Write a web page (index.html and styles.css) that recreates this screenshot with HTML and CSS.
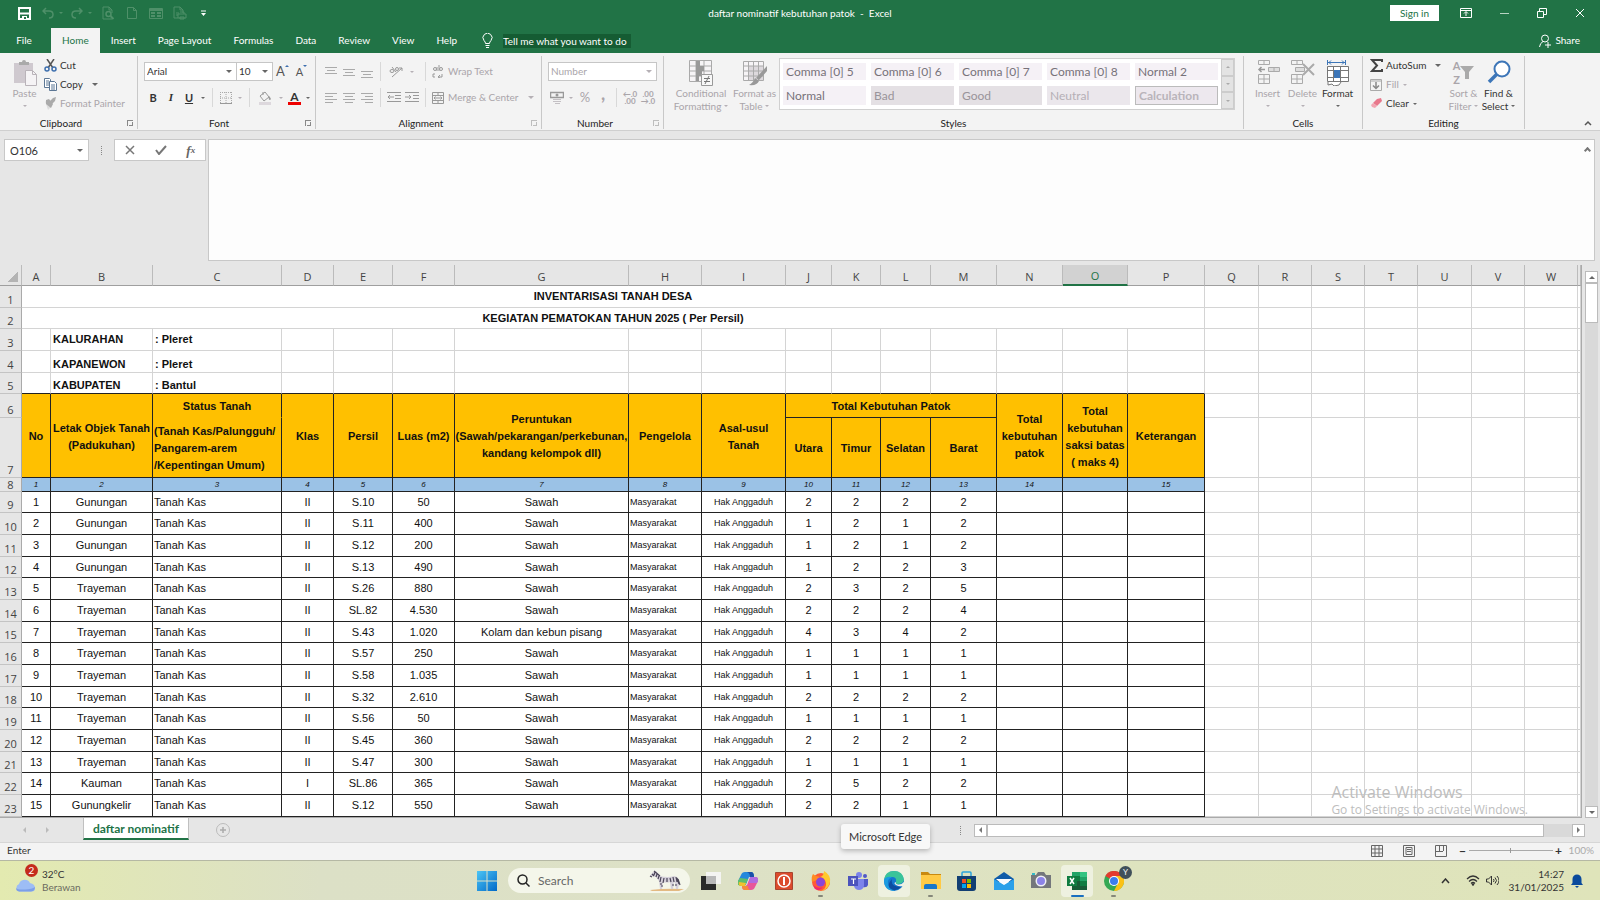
FILE: index.html
```html
<!DOCTYPE html>
<html lang="en">
<head>
  <meta charset="UTF-8">
  <meta name="viewport" content="width=device-width, initial-scale=1.0">
  <title>daftar nominatif kebutuhan patok - Excel</title>
  <link rel="stylesheet" href="styles.css">
</head>
<body>
  <header class="titlebar">
    <div class="quick">
      <button class="q-save" aria-label="Save"><svg width="13" height="13" viewBox="0 0 13 13"><path d="M1 1h11v11H1z" fill="none" stroke="#fff" stroke-width="2"/><path d="M2 6.500h9" stroke="#fff" stroke-width="2"/><path d="M4 9h5v3H4z" fill="#fff"/><path d="M6 10h2v2H6z" fill="#217346"/></svg></button>
      <button class="q-undo" aria-label="Undo"><svg width="12" height="12" viewBox="0 0 12 12"><path d="M4 1L1 4l3 3M1 4h6q4 0 4 3.500t-4 3.500" fill="none" stroke="#4f9069" stroke-width="1.500"/></svg><i class="caret"></i></button>
      <button class="q-undo" aria-label="Redo"><svg width="12" height="12" viewBox="0 0 12 12"><path d="M8 1l3 3-3 3M11 4H5Q1 4 1 7.500T5 11" fill="none" stroke="#4f9069" stroke-width="1.500"/></svg><i class="caret"></i></button>
      <button class="q-icon" aria-label="Print preview"><svg width="13" height="14" viewBox="0 0 13 14"><path d="M10 13H1V1h6l3 3v3M7 1v3h3" fill="none" stroke="#4f9069"/><circle cx="6.500" cy="8" r="2.500" fill="none" stroke="#4f9069" stroke-width="1.500"/><path d="M8.500 10l3 3" stroke="#4f9069" stroke-width="2"/></svg></button>
      <button class="q-icon" aria-label="New"><svg width="10" height="14" viewBox="0 0 10 14"><path d="M.5 1.500h6l3 3v8h-9zM6.500 1.500v3h3" fill="none" stroke="#4f9069"/></svg></button>
      <button class="q-icon" aria-label="Form"><svg width="14" height="13" viewBox="0 0 14 13"><path d="M.5 1.500h13v10H.5z" fill="none" stroke="#4f9069"/><path d="M1 3h12M2 6h4M2 9h4M8 6h4M8 9h4" stroke="#4f9069" stroke-width="2"/></svg></button>
      <button class="q-icon" aria-label="Quick print"><svg width="14" height="14" viewBox="0 0 14 14"><path d="M5 12H1V1h6l3 3v3M7 1v3h3M3 7h3M3 9h2" fill="none" stroke="#4f9069"/><path d="M5 8h8v4H5zM7 6h4v2M7 11h4v2H7z" fill="none" stroke="#4f9069"/></svg></button>
      <button class="q-more" aria-label="Customize"><svg width="7" height="7" viewBox="0 0 7 7"><path d="M1 1h5" stroke="#fff"/><path d="M1 3h5L3.500 6z" fill="#fff"/></svg></button>
    </div>
    <div class="doc-title">daftar nominatif kebutuhan patok&nbsp; -&nbsp; Excel</div>
    <div class="window-tools">
      <button class="signin">Sign in</button>
      <button aria-label="Ribbon display"><svg width="12" height="10" viewBox="0 0 12 10"><path d="M.5.500h11v9H.5zM.5 2.500h11M6 8V4M4 5.500L6 3.500l2 2" fill="none" stroke="#fff"/></svg></button>
      <button aria-label="Minimize"><svg width="9" height="9" viewBox="0 0 9 9"><path d="M0 4.500h9" stroke="#b8d3c2"/></svg></button>
      <button aria-label="Restore"><svg width="10" height="10" viewBox="0 0 10 10"><path d="M.5 3.500h6v6h-6zM2.500 3V.5h7v6H7" fill="none" stroke="#fff"/></svg></button>
      <button aria-label="Close"><svg width="10" height="10" viewBox="0 0 10 10"><path d="M1 1l8 8M9 1L1 9" stroke="#fff"/></svg></button>
    </div>
  </header>

  <nav class="tabs">
    <button class="tab file">File</button>
    <button class="tab active">Home</button>
    <button class="tab">Insert</button>
    <button class="tab">Page Layout</button>
    <button class="tab">Formulas</button>
    <button class="tab">Data</button>
    <button class="tab">Review</button>
    <button class="tab">View</button>
    <button class="tab">Help</button>
    <label class="tell" for="tell"><svg width="11" height="15" viewBox="0 0 11 15"><path d="M3.500 10.500Q3.500 9 2 7.500a4.500 4.500 0 1 1 7 0Q7.500 9 7.500 10.500zM3.500 12.500h4M4 14.500h3" fill="none" stroke="#fff"/></svg></label>
    <input id="tell" class="tell-input" placeholder="Tell me what you want to do">
    <button class="share"><svg width="13" height="14" viewBox="0 0 13 14"><circle cx="6" cy="4.500" r="3.500" fill="none" stroke="#fff"/><path d="M4 7.500Q1 9 .5 13M9 8v6M6 11h6" fill="none" stroke="#fff"/></svg>Share</button>
  </nav>

  <section class="ribbon">
    <div class="group clipboard">
      <div class="tools">
        <button class="big off"><svg width="24" height="26" viewBox="0 0 24 26"><path d="M1 3h19v20H1z" fill="#cfc9cf"/><path d="M6 5V2h3a2 2 0 0 1 4 0h3v3z" fill="#aaa"/><path d="M12.500 10.500h7l4 4v11h-11z" fill="#f5f3f5" stroke="#b9b3b9"/><path d="M19.500 10.500v4h4" fill="none" stroke="#b9b3b9"/></svg><span>Paste</span><i class="caret"></i></button>
        <div class="stack">
          <button><svg width="13" height="13" viewBox="0 0 13 13"><path d="M3 0l6 9M10 0L4 9" stroke="#555" stroke-width="1.500"/><circle cx="3" cy="10" r="2" fill="none" stroke="#3d6fae" stroke-width="1.500"/><circle cx="10" cy="10" r="2" fill="none" stroke="#3d6fae" stroke-width="1.500"/></svg>Cut</button>
          <button><svg width="13" height="13" viewBox="0 0 13 13"><path d="M.5.500h5l1 1v8h-6zM2 3h3M2 5h3M2 7h3" fill="#fff" stroke="#5b7694"/><path d="M5.500 3.500h5l2 2v7h-7zM7 7h4M7 9h4M7 11h4" fill="#fff" stroke="#5b7694"/></svg>Copy<i class="caret gap"></i></button>
          <button class="off"><svg width="13" height="13" viewBox="0 0 13 13"><path d="M1 4l6 6-3 3z" fill="#ddd"/><path d="M2 3l3-1 4 5-2 4-5-4zM9 1l3-1-1 4-3 3-2-3z" fill="#aaa"/></svg>Format Painter</button>
        </div>
      </div>
      <div class="group-name more">Clipboard<i class="launcher"></i></div>
    </div>

    <div class="group font">
      <div class="tools rows">
        <div class="row">
          <label class="combo face"><select aria-label="Font"><option>Arial</option></select><i class="caret"></i></label>
          <label class="combo size"><select aria-label="Font size"><option>10</option></select><i class="caret"></i></label>
          <button class="grow">A<sup class="up"></sup></button>
          <button class="shrink">A<sup class="down"></sup></button>
        </div>
        <div class="row">
          <button class="w18"><b>B</b></button>
          <button class="w18 ital">I</button>
          <button class="w18"><u><b>U</b></u></button>
          <button class="w10" aria-label="Underline options"><i class="caret"></i></button>
          <i class="sep"></i>
          <button class="w18 off" aria-label="Borders"><svg width="12" height="12" viewBox="0 0 12 12"><path d="M.5 0v12M6 0v12M11.500 0v12M0 .5h12M0 6h12" fill="none" stroke="#aaa" stroke-dasharray="1 1"/><path d="M0 11.500h12" stroke="#999"/></svg></button>
          <button class="w10 off" aria-label="Border options"><i class="caret"></i></button>
          <i class="sep"></i>
          <button class="w22 off" aria-label="Fill color"><svg width="14" height="14" viewBox="0 0 14 14"><path d="M2 5l5-4 4 5-5 4zM5 4V1" fill="none" stroke="#999"/><path d="M11 5q3 3 1 4-2 0-1-4" fill="#999"/><path d="M1 11h12v3H1z" fill="#ddd8dd"/></svg></button>
          <button class="w10 off" aria-label="Fill options"><i class="caret"></i></button>
          <button class="w18 color-a">A</button>
          <button class="w10" aria-label="Font color options"><i class="caret"></i></button>
        </div>
      </div>
      <div class="group-name more">Font<i class="launcher"></i></div>
    </div>

    <div class="group align">
      <div class="tools rows">
        <div class="row off">
          <button class="w18" aria-label="Top align"><svg width="12" height="12" viewBox="0 0 12 12"><path d="M0 1.500h12M2 4.500h8M0 7.500h12" stroke="#aaa"/></svg></button>
          <button class="w18" aria-label="Middle align"><svg width="12" height="12" viewBox="0 0 12 12"><path d="M0 3.500h12M2 6.500h8M0 9.500h12" stroke="#aaa"/></svg></button>
          <button class="w18" aria-label="Bottom align"><svg width="12" height="12" viewBox="0 0 12 12"><path d="M0 5.500h12M2 8.500h8M0 11.500h12" stroke="#aaa"/></svg></button>
          <i class="sep"></i>
          <button class="w22 orient" aria-label="Orientation"><svg width="14" height="13" viewBox="0 0 14 13"><path d="M3 12L13 3M13 6V3h-3" fill="none" stroke="#999"/><ellipse cx="3" cy="6" rx="2" ry="1.500" fill="none" stroke="#999"/><path d="M3 2l4 5" stroke="#999"/><circle cx="8" cy="4" r="1.500" fill="none" stroke="#999"/></svg></button>
          <button class="w10" aria-label="Orientation options"><i class="caret"></i></button>
          <i class="sep far"></i>
          <button class="wrap"><svg width="12" height="13" viewBox="0 0 12 13"><circle cx="3" cy="4" r="1.500" fill="none" stroke="#999"/><path d="M5 2v4M7 0v6M3 9h-2v3h2M6 12h4V9M8 10l-2 2 2 1" fill="none" stroke="#999"/><circle cx="9" cy="4" r="1.500" fill="none" stroke="#999"/></svg>Wrap Text</button>
        </div>
        <div class="row off">
          <button class="w18" aria-label="Align left"><svg width="12" height="10" viewBox="0 0 12 10"><path d="M0 .5h12M0 3.500h8M0 6.500h12M0 9.500h8" stroke="#aaa"/></svg></button>
          <button class="w18" aria-label="Center"><svg width="12" height="10" viewBox="0 0 12 10"><path d="M0 .5h12M2 3.500h8M0 6.500h12M2 9.500h8" stroke="#aaa"/></svg></button>
          <button class="w18" aria-label="Align right"><svg width="12" height="10" viewBox="0 0 12 10"><path d="M0 .5h12M4 3.500h8M0 6.500h12M4 9.500h8" stroke="#aaa"/></svg></button>
          <i class="sep"></i>
          <button class="w18" aria-label="Decrease indent"><svg width="14" height="11" viewBox="0 0 14 11"><path d="M0 .5h14M8 3.500h6M8 6.500h6M0 9.500h14M1 5h6M3 3L1 5l2 2" fill="none" stroke="#999"/></svg></button>
          <button class="w18" aria-label="Increase indent"><svg width="14" height="11" viewBox="0 0 14 11"><path d="M0 .5h14M8 3.500h6M8 6.500h6M0 9.500h14M0 5h6M4 3l2 2-2 2" fill="none" stroke="#999"/></svg></button>
          <i class="sep"></i>
          <button class="wrap"><svg width="12" height="12" viewBox="0 0 12 12"><path d="M.5.500h11v11H.5zM.5 3.500h11M.5 8.500h11M6 .5v3M6 8.500v3M2 6h8M3.500 4.500L2 6l1.500 1.500M8.500 4.500L10 6 8.500 7.500" fill="none" stroke="#999"/></svg>Merge &amp; Center<i class="caret gap"></i></button>
        </div>
      </div>
      <div class="group-name more">Alignment<i class="launcher off"></i></div>
    </div>

    <div class="group number">
      <div class="tools rows">
        <div class="row off">
          <label class="combo format"><select aria-label="Number format"><option>Number</option></select><i class="caret"></i></label>
        </div>
        <div class="row off">
          <button class="w18" aria-label="Accounting"><svg width="14" height="13" viewBox="0 0 14 13"><path d="M.5 1.500h13v5H.5z" fill="none" stroke="#999" stroke-width="1.500"/><circle cx="7" cy="4" r="1.500" fill="#999"/><path d="M3 8.500h8M3 10.500h8M5 12.500h5" stroke="#c4c0c4"/></svg></button>
          <button class="w10" aria-label="Accounting options"><i class="caret"></i></button>
          <button class="w18 pct">%</button>
          <button class="w18 comma">,</button>
          <i class="sep"></i>
          <button class="w18 dec"><span>←.0</span><span>.00</span></button>
          <button class="w18 dec"><span>.00</span><span>→.0</span></button>
        </div>
      </div>
      <div class="group-name more">Number<i class="launcher off"></i></div>
    </div>

    <div class="group styles">
      <div class="tools">
        <button class="big off"><svg width="24" height="26" viewBox="0 0 24 26"><path d="M.5.500h22v21H.5zM.5 6h22M.5 11h22M.5 16h22M7 .5v21M15 .5v21" fill="#f6f4f6" stroke="#aaa"/><path d="M7 1h4v5H7zM7 6h8v5H7zM7 11h6v5H7zM7 16h3v5H7z" fill="#999"/><path d="M12.500 14.500h11v11h-11z" fill="#f8f8f8" stroke="#999"/><path d="M15 18.500h6M15 21.500h6M20 16l-4 8" stroke="#777"/></svg><span>Conditional<br>Formatting<i class="caret in"></i></span></button>
        <button class="big off"><svg width="24" height="26" viewBox="0 0 24 26"><path d="M.5 1.500h20v19H.5z" fill="#f6f4f6" stroke="#aaa"/><path d="M6 6h14v14H6z" fill="#ddd9dd"/><path d="M.5 6h20M.5 11h20M.5 16h20M5.500 1.500v19M10.500 1.500v19M15.500 1.500v19" stroke="#aaa"/><path d="M24 6v5l-8 9-3-2zM12 18l4 3q-2 5-10 4 4-2 6-7" fill="#999"/></svg><span>Format as<br>Table<i class="caret in"></i></span></button>
        <div class="gallery">
          <div class="swatches">
            <button>Comma [0] 5</button>
            <button>Comma [0] 6</button>
            <button>Comma [0] 7</button>
            <button>Comma [0] 8</button>
            <button>Normal 2</button>
            <button>Normal</button>
            <button class="gray">Bad</button>
            <button class="gray">Good</button>
            <button class="gray faint">Neutral</button>
            <button class="gray calc">Calculation</button>
          </div>
          <div class="gallery-scroll">
            <button aria-label="Up"><i class="caret flip"></i></button>
            <button aria-label="Down"><i class="caret"></i></button>
            <button aria-label="More"><i class="caret"></i></button>
          </div>
        </div>
      </div>
      <div class="group-name">Styles</div>
    </div>

    <div class="group cells">
      <div class="tools">
        <button class="big off"><svg width="24" height="26" viewBox="0 0 24 26"><path d="M2.500.500h11v4h-11zM8 .5v4M2.500 14.500h11v9h-11zM2.500 19h11M8 14.500v9" fill="none" stroke="#aaa"/><path d="M12.500 7.500h11v4h-11zM18 7.500v4" fill="#ddd" stroke="#aaa"/><path d="M3 9.500h6M5.500 7L3 9.500 5.500 12" fill="none" stroke="#999" stroke-width="1.500"/></svg><span>Insert</span><i class="caret"></i></button>
        <button class="big off"><svg width="24" height="26" viewBox="0 0 24 26"><path d="M.5.500h11v4H.5zM6 .5v4M.5 14.500h11v9H.5zM.5 19h11M6 14.500v9" fill="none" stroke="#aaa"/><path d="M4.500 7.500h9v4h-9z" fill="#ddd" stroke="#aaa"/><path d="M12 4l11 11M23 4L12 15" stroke="#aaa" stroke-width="2"/></svg><span>Delete</span><i class="caret"></i></button>
        <button class="big"><svg width="24" height="26" viewBox="0 0 24 26"><path d="M1.500 0v5M19.500 0v5M2 2.500h17M5 .5l-2 2 2 2M16 .5l2 2-2 2" fill="none" stroke="#3d76b8"/><path d="M1.500 6.500h21v15h-21zM1.500 10.500h21M1.500 17.500h21M7.500 6.500v15M14.500 6.500v15M2 22v3l4-1 2 2 5-1 2-3" fill="#fff" stroke="#777"/><path d="M8 10h6v8H8z" fill="#3d76b8"/></svg><span>Format</span><i class="caret"></i></button>
      </div>
      <div class="group-name">Cells</div>
    </div>

    <div class="group editing">
      <div class="tools">
        <div class="stack">
          <button><svg width="13" height="13" viewBox="0 0 13 13"><path d="M12 3V1H2l5 5.500L2 12h10v-2" fill="none" stroke="#444" stroke-width="2"/></svg>AutoSum<i class="caret gap"></i></button>
          <button class="off"><svg width="13" height="13" viewBox="0 0 13 13"><path d="M.5 1.500h11v11H.5zM.5 3h11" fill="none" stroke="#aaa"/><path d="M6 4v6M3 7.500l3 3 3-3" fill="none" stroke="#888" stroke-width="1.500"/></svg>Fill<i class="caret in"></i></button>
          <button><svg width="13" height="13" viewBox="0 0 13 13"><path d="M7 2l4-1 1 3-5 5-4-3z" fill="#e8788c"/><path d="M3 6l4 3-2 2-3-1-1-2z" fill="#f2a5b2"/></svg>Clear<i class="caret in"></i></button>
        </div>
        <button class="big off"><span class="az"><b>A<br>Z</b><svg width="14" height="14" viewBox="0 0 14 14"><path d="M0 0h14L9 6v7H5V6z" fill="#aaa"/></svg></span><span>Sort &amp;<br>Filter<i class="caret in"></i></span></button>
        <button class="big"><svg width="24" height="26" viewBox="0 0 24 26"><circle cx="15" cy="9" r="7.500" fill="#fff" stroke="#3d76b8" stroke-width="2"/><path d="M10 14l-8 8" stroke="#3d76b8" stroke-width="3.500"/></svg><span>Find &amp;<br>Select<i class="caret in"></i></span></button>
      </div>
      <div class="group-name">Editing</div>
    </div>
    <button class="collapse" aria-label="Collapse ribbon"><svg width="8" height="6" viewBox="0 0 8 6"><path d="M1 5l3-3 3 3" fill="none" stroke="#555" stroke-width="1.500"/></svg></button>
  </section>

  <section class="formula-bar">
    <div class="name-box"><input aria-label="Name box" value="O106"><i class="caret"></i></div>
    <i class="dots"></i>
    <div class="fx">
      <button aria-label="Cancel"><svg width="10" height="10" viewBox="0 0 10 10"><path d="M1 1l8 8M9 1L1 9" stroke="#777" stroke-width="1.500"/></svg></button>
      <button aria-label="Enter"><svg width="12" height="10" viewBox="0 0 12 10"><path d="M1 5l3 4 7-8" fill="none" stroke="#777" stroke-width="2"/></svg></button>
      <button class="fx-btn"><i>f</i><small>x</small></button>
    </div>
    <textarea aria-label="Formula"></textarea>
    <i class="formula-caret"></i>
  </section>

  <main class="workspace">
    <div class="pane">
      <table class="sheet">
        <colgroup id="cols"></colgroup>
        <thead><tr id="letters"></tr></thead>
        <tbody id="top">
          <tr class="h22"><th>1</th><td class="title" colspan="16">INVENTARISASI TANAH DESA</td></tr>
          <tr class="h21"><th>2</th><td class="title" colspan="16">KEGIATAN PEMATOKAN TAHUN 2025 ( Per Persil)</td></tr>
          <tr class="h22 info"><th>3</th><td></td><td>KALURAHAN</td><td>: Pleret</td></tr>
          <tr class="h22 info low"><th>4</th><td></td><td>KAPANEWON</td><td>: Pleret</td></tr>
          <tr class="h21 info low last"><th>5</th><td></td><td>KABUPATEN</td><td>: Bantul</td></tr>
          <tr class="h24 head">
            <th>6</th>
            <td rowspan="2">No</td>
            <td rowspan="2">Letak Objek Tanah<br>(Padukuhan)</td>
            <td class="open">Status Tanah</td>
            <td rowspan="2">Klas</td>
            <td rowspan="2">Persil</td>
            <td rowspan="2">Luas (m2)</td>
            <td rowspan="2">Peruntukan<br>(Sawah/pekarangan/perkebunan,<br>kandang kelompok dll)</td>
            <td rowspan="2">Pengelola</td>
            <td rowspan="2">Asal-usul<br>Tanah</td>
            <td colspan="4">Total Kebutuhan Patok</td>
            <td rowspan="2">Total<br>kebutuhan<br>patok</td>
            <td rowspan="2">Total<br>kebutuhan<br>saksi batas<br>( maks 4)</td>
            <td rowspan="2">Keterangan</td>
          </tr>
          <tr class="h60 head">
            <th>7</th>
            <td class="left">(Tanah Kas/Palungguh/<br>Pangarem-arem<br>/Kepentingan Umum)</td>
            <td>Utara</td><td>Timur</td><td>Selatan</td><td>Barat</td>
          </tr>
          <tr class="h14 nums"><th>8</th><td>1</td><td>2</td><td>3</td><td>4</td><td>5</td><td>6</td><td>7</td><td>8</td><td>9</td><td>10</td><td>11</td><td>12</td><td>13</td><td>14</td><td></td><td>15</td></tr>
        </tbody>
        <tbody id="data"></tbody>
      </table>
      <div class="watermark"><div>Activate Windows</div><p>Go to Settings to activate Windows.</p></div>
    </div>
    <div class="vscroll">
      <button aria-label="Scroll up"><i class="caret flip"></i></button>
      <div class="vtrack"><div class="vthumb"></div></div>
      <button aria-label="Scroll down"><i class="caret"></i></button>
    </div>
  </main>

  <section class="sheet-tabs">
    <div class="tab-nav"><i class="tri left"></i><i class="tri right"></i></div>
    <button class="sheet-tab">daftar nominatif</button>
    <button class="add" aria-label="New sheet"><svg width="14" height="14" viewBox="0 0 14 14"><path d="M7 4v6M4 7h6" stroke="#aaa" stroke-width="1.500"/><circle cx="7" cy="7" r="6.500" fill="none" stroke="#bbb"/></svg></button>
    <i class="dots"></i>
    <div class="hscroll">
      <button aria-label="Scroll left"><i class="tri left"></i></button>
      <div class="htrack"><div class="hthumb"></div></div>
      <button aria-label="Scroll right"><i class="tri right"></i></button>
    </div>
  </section>

  <section class="status">
    <span>Enter</span>
    <div class="views">
      <button aria-label="Normal view"><svg width="12" height="12" viewBox="0 0 12 12"><path d="M.5.500h11v11H.5zM4 0v12M8 0v12M0 4h12M0 8h12" fill="none" stroke="#666"/></svg></button>
      <button aria-label="Page layout view"><svg width="12" height="12" viewBox="0 0 12 12"><path d="M.5.500h11v11H.5zM3 2.500h6v7H3zM4 4.500h4M4 6.500h4" fill="none" stroke="#666"/></svg></button>
      <button aria-label="Page break view"><svg width="12" height="12" viewBox="0 0 12 12"><path d="M.5.500h11v11H.5zM4.500 0v6M8.500 0v6M0 6.500h8" fill="none" stroke="#666"/></svg></button>
    </div>
    <div class="zoom">
      <button>−</button>
      <input type="range" aria-label="Zoom" min="0" max="100" value="50">
      <button>+</button>
      <span>100%</span>
    </div>
  </section>

  <footer class="taskbar">
    <button class="weather">
      <span class="cloud"><svg width="21" height="14" viewBox="0 0 21 14"><path d="M4 13.500a4 4 0 0 1 0-7.500 6 6 0 0 1 11-1q5 1 5 5t-4 3.500z" fill="#9dbdf5"/><path d="M1 10q2 2 9 1.500T20 9q0 4-4 4.500H4Q1 13 1 10" fill="#7c9fe8"/></svg><i class="badge">2</i></span>
      <span class="lines"><span>32°C</span><span class="dim">Berawan</span></span>
    </button>
    <div class="center">
      <button class="start" aria-label="Start"><svg width="20" height="20" viewBox="0 0 20 20"><defs><linearGradient id="w" x1="0" y1="0" x2="1" y2="1"><stop offset="0" stop-color="#4cc5f5"/><stop offset="1" stop-color="#0068c8"/></linearGradient></defs><path d="M0 0h9.500v9.500H0zM10.500 0H20v9.500h-9.500zM0 10.500h9.500V20H0zM10.500 10.500H20V20h-9.500z" fill="url(#w)"/></svg></button>
      <label class="search">
        <svg width="13" height="13" viewBox="0 0 13 13"><circle cx="5.500" cy="5.500" r="4.500" fill="none" stroke="#222" stroke-width="1.500"/><path d="M9 9l3.500 3.500" stroke="#222" stroke-width="1.500"/></svg>
        <input placeholder="Search" aria-label="Search">
        <svg width="36" height="22" viewBox="0 0 36 22"><path d="M1 20q16-2 34-1l-5 2H3z" fill="#e3b982"/><path d="M1 6l3-4 3-1 4 5q8 2 14 0 3 0 4 3l1 5-1 5h-2l-1-6-1-1-1 7h-2l-1-7q-3 1-7 0l-1 7h-2l-1-8-3-4-4-1-1 1z" fill="#d5d0da"/><path d="M5 1l6 5M3 4l2 2M6 2L5 5M8 4L7 7M10 6L9 9M12 7l-1 5M15 8l-1 5M18 8v4M21 8l1 4M24 7l1 5M27 7l1 5M11 14h2M12 16h2M23 15h2M26 15h2M28 8l2 6M29 9l2 6M1 6l2 1" fill="none" stroke="#4b4558" stroke-width="1.200"/></svg>
      </label>
      <nav class="apps">
        <button aria-label="Task view"><svg width="20" height="20" viewBox="0 0 20 20"><path d="M0 5h15v14H0z" fill="#2a2a2a"/><path d="M5 1h15v12H5z" fill="#f4f4f2"/><path d="M5 5h10v8H5z" fill="#b9b9b9"/></svg></button>
        <button aria-label="Copilot"><svg width="20" height="20" viewBox="0 0 20 20"><path d="M7 1h6q3 0 3 5h-4L8 14H3q-4 0-3-4l3-6q1-3 4-3" fill="#2488dc"/><path d="M2 7l-2 3q-1 5 3 5h4l3-7z" fill="#5fbf6a"/><path d="M1 11q-1 4 2 4h4l1-3z" fill="#f0c22e"/><path d="M13 19H7q-3 0-3-4h4l4-9h5q4 0 3 4l-3 6q-1 3-4 3" fill="#e8569a"/><path d="M4 15h6q0 4 3 4H7q-3 0-3-4" fill="#f58a3c"/><path d="M12 6h5q4 0 3 4l-1 2h-8z" fill="#b06be0"/><path d="M9 1h4q3 0 3 5h-4q0-4-3-5" fill="#1b4fa8"/><path d="M8 14l3-8h1l-3 8z" fill="#e6e8d4"/></svg></button>
        <button aria-label="Power"><svg width="18" height="18" viewBox="0 0 18 18"><path d="M.5.500h17v17H.5z" fill="#dc4b2c" stroke="#a8452f"/><circle cx="9" cy="9" r="6" fill="none" stroke="#fff" stroke-width="1.500"/><path d="M9 5v8" stroke="#fff" stroke-width="2"/></svg></button>
        <button class="run" aria-label="Firefox"><svg width="20" height="20" viewBox="0 0 20 20"><circle cx="10" cy="11" r="9" fill="#ff5a36"/><path d="M13 0q7 4 6 11t-9 9q6-3 5-8t-6-6q4-1 4-6" fill="#ffc92e"/><path d="M2 3q3 3 7 3l-3 3-5 2q-1-5 1-8" fill="#ff8b25"/><circle cx="9.500" cy="11" r="4.500" fill="#8a46d8"/><path d="M2 14q4 4 10 2-3 5-8 2z" fill="#f2286b"/></svg></button>
        <button aria-label="Teams"><svg width="20" height="18" viewBox="0 0 20 18"><circle cx="11" cy="3" r="3" fill="#7b83eb"/><circle cx="17" cy="4" r="2" fill="#5059c9"/><path d="M14 7h6v6q-1 3-5 2z" fill="#5059c9"/><path d="M6 7h10v7q-1 4-5 4t-5-4z" fill="#7b83eb"/><path d="M0 4h10v10H0z" fill="#4b53bc"/><path d="M3 7h5M5.500 7v5" stroke="#fff" stroke-width="1.200"/></svg></button>
        <button class="lit" aria-label="Microsoft Edge"><svg width="20" height="20" viewBox="0 0 20 20"><circle cx="10" cy="10" r="10" fill="#1477cf"/><path d="M0 9Q1 0 10 0t10 9q-1 4-6 4-3 0-2-2 1-5-4-5-6 0-8 3" fill="#3ac49a"/><path d="M0 9q2-4 8-3-5 2-4 7t7 7Q0 20 0 9" fill="#1a9be0"/><path d="M8 8q-2 8 9 8-5 5-10 2T8 8" fill="#0d4da0"/><path d="M12 11q-1 2 2 2.500t6-2.500q1 2-1 4-4 1-7-1t0-3" fill="#f0f2e4"/></svg></button>
        <button class="run" aria-label="File Explorer"><svg width="20" height="18" viewBox="0 0 20 18"><path d="M0 0h7l2 2h11v6H0z" fill="#c98a10"/><path d="M0 3h20v14H0z" fill="#ffca45"/><path d="M3 17v-3q0-2 2-2h9q2 0 2 2v3z" fill="#1877c9"/></svg></button>
        <button aria-label="Store"><svg width="20" height="20" viewBox="0 0 20 20"><path d="M5 5V2q0-1 1-1h7q1 0 1 1v3" fill="none" stroke="#2aa3dc" stroke-width="1.500"/><path d="M0 5h19v12q0 3-3 3H3q-3 0-3-3z" fill="#123f73"/><path d="M5 8h4v4H5z" fill="#f25022"/><path d="M10 8h4v4h-4z" fill="#7fba00"/><path d="M5 13h4v4H5z" fill="#00a4ef"/><path d="M10 13h4v4h-4z" fill="#ffb900"/></svg></button>
        <button aria-label="Mail"><svg width="20" height="18" viewBox="0 0 20 18"><path d="M0 7l10-7 10 7v3H0z" fill="#0f5ba8"/><path d="M2 7h16l-8 7z" fill="#fff"/><path d="M0 7l10 6 10-6v11H0z" fill="#2aa0ea"/><path d="M3 7h14l-7 5z" fill="#f8fbff"/></svg></button>
        <button aria-label="Camera"><svg width="20" height="17" viewBox="0 0 20 17"><path d="M0 3h5l2-3h6l2 3h5v13H0z" fill="#74777c"/><circle cx="10" cy="9" r="5.500" fill="#f0f0f5"/><circle cx="10" cy="9" r="4" fill="#8c83e8"/><path d="M1 1h3v2H1z" fill="#35b8c8"/></svg></button>
        <button class="lit on" aria-label="Excel"><svg width="20" height="18" viewBox="0 0 20 18"><path d="M5 0h15v18H5z" fill="#21a366"/><path d="M5 4h8v5H5z" fill="#107c41"/><path d="M13 0h7v5h-7z" fill="#33c481"/><path d="M5 9h15v9H5z" fill="#185c37"/><path d="M13 9h7v5h-7z" fill="#107c41"/><path d="M0 4h10v10H0z" fill="#107c41"/><path d="M3 6l4 6M7 6l-4 6" stroke="#fff" stroke-width="1.500"/></svg></button>
        <button class="run" aria-label="Chrome"><svg width="20" height="20" viewBox="0 0 20 20"><circle cx="10" cy="10" r="10" fill="#34a853"/><path d="M10 10L1.300 5A10 10 0 0 1 18.700 5z" fill="#e33b2e"/><path d="M10 5h8.700A10 10 0 0 1 10 20l4-8z" fill="#fbc116"/><circle cx="10" cy="10" r="5" fill="#fff"/><circle cx="10" cy="10" r="4" fill="#3b7ded"/></svg><i class="avatar">Y</i></button>
      </nav>
    </div>
    <div class="tray">
      <svg width="9" height="6" viewBox="0 0 9 6"><path d="M1 5l3.500-4L8 5" fill="none" stroke="#333" stroke-width="1.500"/></svg>
      <svg class="wifi" width="14" height="11" viewBox="0 0 14 11"><path d="M1 4q6-6 12 0M3 6.500q4-4 8 0M5 8.500q2-2 4 0" fill="none" stroke="#333" stroke-width="1.200"/><circle cx="7" cy="9.500" r="1.200" fill="#333"/></svg>
      <svg width="13" height="11" viewBox="0 0 13 11"><path d="M.5 4h2l3-3v9l-3-3h-2zM7.500 4q1 1.500 0 3M9 2.500q3 3 0 6M11 1q4 4.500 0 9" fill="none" stroke="#333"/></svg>
      <span class="lines clock"><span>14:27</span><span>31/01/2025</span></span>
      <svg width="12" height="14" viewBox="0 0 12 14"><path d="M0 11l1.500-2V5a4.500 4.500 0 0 1 9 0v4l1.500 2zM4 12h4l-2 2z" fill="#0a4a9c"/></svg>
    </div>
  </footer>
  <div class="tooltip">Microsoft Edge</div>

  <script src="script.js"></script>
</body>
</html>
```
FILE: script.js
```js
const letters = 'ABCDEFGHIJKLMNOPQRSTUVW'.split('');
const widths = [22, 29, 102, 129, 52, 59, 62, 174, 73, 84, 46, 49, 50, 66, 66, 65, 77, 54, 53, 53, 53, 54, 53, 53];

// padukuhan, klas, persil, luas, peruntukan, utara, timur, selatan, barat
const records = [
  ['Gunungan', 'II', 'S.10', '50', 'Sawah', 2, 2, 2, 2],
  ['Gunungan', 'II', 'S.11', '400', 'Sawah', 1, 2, 1, 2],
  ['Gunungan', 'II', 'S.12', '200', 'Sawah', 1, 2, 1, 2],
  ['Gunungan', 'II', 'S.13', '490', 'Sawah', 1, 2, 2, 3],
  ['Trayeman', 'II', 'S.26', '880', 'Sawah', 2, 3, 2, 5],
  ['Trayeman', 'II', 'SL.82', '4.530', 'Sawah', 2, 2, 2, 4],
  ['Trayeman', 'II', 'S.43', '1.020', 'Kolam dan kebun pisang', 4, 3, 4, 2],
  ['Trayeman', 'II', 'S.57', '250', 'Sawah', 1, 1, 1, 1],
  ['Trayeman', 'II', 'S.58', '1.035', 'Sawah', 1, 1, 1, 1],
  ['Trayeman', 'II', 'S.32', '2.610', 'Sawah', 2, 2, 2, 2],
  ['Trayeman', 'II', 'S.56', '50', 'Sawah', 1, 1, 1, 1],
  ['Trayeman', 'II', 'S.45', '360', 'Sawah', 2, 2, 2, 2],
  ['Trayeman', 'II', 'S.47', '300', 'Sawah', 1, 1, 1, 1],
  ['Kauman', 'I', 'SL.86', '365', 'Sawah', 2, 5, 2, 2],
  ['Gunungkelir', 'II', 'S.12', '550', 'Sawah', 2, 2, 1, 1]
];

document.getElementById('cols').innerHTML =
  widths.map(w => `<col style="width:${w}px">`).join('') + '<col>';

document.getElementById('letters').innerHTML = '<th class="corner"></th>' +
  letters.map(l => `<th class="${l === 'O' ? 'picked' : ''}">${l}</th>`).join('') + '<th></th>';

// fill every row out to the last column with blank cells
const blanks = n => '<td class="blank"></td>'.repeat(n);

document.querySelectorAll('#top tr').forEach(tr => {
  tr.insertAdjacentHTML('beforeend', blanks(tr.classList.contains('info') ? 21 : 8));
});

document.getElementById('data').innerHTML = records.map((r, i) => {
  const [place, klas, persil, luas, use, ...counts] = r;
  return `<tr><th>${i + 9}</th><td>${i + 1}</td><td>${place}</td><td class="left">Tanah Kas</td>` +
    `<td>${klas}</td><td>${persil}</td><td>${luas}</td><td>${use}</td>` +
    '<td class="left small">Masyarakat</td><td class="small">Hak Anggaduh</td>' +
    counts.map(c => `<td>${c}</td>`).join('') + '<td></td><td></td><td></td>' + blanks(8) + '</tr>';
}).join('') + '<tr><th></th>' + '<td></td>'.repeat(16) + blanks(8) + '</tr>';
```
FILE: styles.css
```css
* {
  box-sizing: border-box;
}
body {
  margin: 0;
  height: 100vh;
  display: flex;
  flex-direction: column;
  overflow: hidden;
  font-family: Lato, "Open Sans", sans-serif;
  font-size: 10px;
  line-height: 13px;
  color: #333;
  background: #e6e6e6;
}
button, input, select, textarea {
  font: inherit;
  color: inherit;
  background: none;
  border: none;
  border-radius: 0;
  padding: 0;
  margin: 0;
  outline: none;
}
button {
  display: flex;
  align-items: center;
  justify-content: center;
  white-space: nowrap;
}
svg {
  flex: none;
}
.caret {
  flex: none;
  width: 0;
  border: 3px solid transparent;
  border-top-color: #666;
  border-bottom-width: 0;
}
.flip {
  transform: rotate(180deg);
}
.off {
  color: #aaa5aa;
}
.off .caret {
  border-top-color: #b5b0b5;
}
.dots {
  width: 1px;
  height: 9px;
  border-left: 1px dotted #888;
}

/* title bar */
.titlebar {
  height: 28px;
  display: grid;
  grid-template-columns: 1fr auto 1fr;
  align-items: center;
  padding-bottom: 2px;
  background: #217346;
  color: #fff;
}
.quick {
  display: flex;
  padding-left: 18px;
}
.quick .caret {
  border-top-color: #4f9069;
  border-width: 2px 2px 0;
  margin-left: 5px;
}
.q-save {
  margin-right: 11px;
}
.q-undo {
  margin-right: 8px;
}
.q-icon {
  width: 24px;
}
.q-icon:nth-child(4) {
  margin-left: -4px;
}
.q-more {
  margin-left: 8px;
}
.window-tools {
  display: flex;
  justify-content: flex-end;
  padding-right: 1px;
}
.window-tools button {
  width: 38px;
}
.window-tools .signin {
  width: 49px;
  height: 16px;
  margin-right: 8px;
  background: #fff;
  color: #217346;
}

/* tabs */
.tabs {
  height: 25px;
  display: flex;
  align-items: stretch;
  background: #217346;
  color: #fff;
}
.tab {
  padding: 0 11px;
}
.tab.file {
  width: 51px;
  padding-right: 14px;
}
.tab.active {
  background: #f3f3f3;
  color: #217346;
}
.tell {
  display: flex;
  align-items: center;
  padding: 0 10px 0 14px;
}
.tell-input {
  align-self: center;
  width: 128px;
  height: 14px;
  background: #155c33;
}
.tell-input::placeholder {
  color: #fff;
  opacity: 1;
}
.share {
  margin-left: auto;
  padding-right: 20px;
  gap: 3px;
}

/* ribbon */
.ribbon {
  height: 78px;
  display: flex;
  background: #f3f3f3;
  border-bottom: 1px solid #cfcfcf;
}
.group {
  display: flex;
  flex-direction: column;
  margin: 3px 0 1px;
  border-right: 1px solid #c8c8c8;
}
.clipboard {
  width: 138px;
}
.font {
  width: 178px;
}
.align {
  width: 226px;
}
.number {
  width: 122px;
}
.styles {
  flex: 1;
}
.cells {
  width: 119px;
}
.editing {
  width: 162px;
}
.collapse {
  width: 75px;
  align-self: flex-end;
  height: 14px;
  justify-content: flex-end;
  padding-right: 8px;
}
.tools {
  flex: 1;
  min-height: 0;
  display: flex;
}
.group-name {
  position: relative;
  height: 12px;
  line-height: 12px;
  text-align: center;
  color: #222;
}
.group-name.more {
  padding-right: 15px;
}
.launcher {
  position: absolute;
  right: 4px;
  top: 3px;
  width: 6px;
  height: 6px;
  border: 1px solid #888;
  border-width: 1px 0 0 1px;
}
.launcher::after {
  content: "";
  position: absolute;
  right: 0;
  bottom: 0;
  width: 3px;
  height: 3px;
  border: 1px solid #888;
  border-width: 0 1px 1px 0;
}
.launcher.off {
  opacity: 0.5;
}
.big {
  flex-direction: column;
  justify-content: flex-start;
  padding-top: 4px;
  width: 35px;
}
.big span {
  margin-top: 1px;
}
.big > .caret {
  margin-top: 5px;
  border-width: 2px 2px 0;
}
.caret.in {
  display: inline-block;
  border-width: 2px 2px 0;
  margin: 0 0 3px 3px;
}
.stack .caret.in {
  margin: 0 0 0 1px;
}
.caret.gap {
  margin-left: 6px;
}
.clipboard .tools {
  padding-left: 7px;
}
.stack {
  display: flex;
  flex-direction: column;
  align-items: flex-start;
  padding-left: 2px;
}
.stack button {
  height: 19px;
  gap: 3px;
}
.rows {
  flex-direction: column;
  padding: 6px 0 0 6px;
  gap: 7px;
}
.row {
  display: flex;
  align-items: center;
  height: 19px;
}
.combo {
  display: flex;
  align-items: center;
  height: 19px;
  padding: 0 4px 0 2px;
  background: #fff;
  border: 1px solid #c6c6c6;
}
.combo select {
  flex: 1;
  min-width: 0;
  appearance: none;
}
.face {
  width: 93px;
}
.size {
  width: 36px;
  border-left: none;
}
.format {
  width: 109px;
}
.grow, .shrink {
  width: 19px;
  font-size: 13px;
  color: #555;
}
.shrink {
  font-size: 11px;
}
.up, .down {
  align-self: flex-start;
  border: 2px solid transparent;
  border-bottom-color: #3d6fae;
  border-top-width: 0;
}
.down {
  border-width: 2px 2px 0;
  border-top-color: #3d6fae;
}
.w18 {
  width: 18px;
  font-size: 11px;
}
.w10 {
  width: 10px;
}
.w22 {
  width: 22px;
}
.w10 .caret {
  border-width: 2px 2px 0;
}
.ital {
  font-family: "Liberation Serif", serif;
  font-style: italic;
  font-weight: bold;
}
.sep {
  width: 1px;
  height: 19px;
  margin: 0 4px;
  background: #d8d8d8;
}
.sep.far {
  margin-left: 8px;
}
.color-a {
  height: 15px;
  border-bottom: 3px solid #e00;
  font-size: 12px;
  font-weight: bold;
  width: 13px;
  margin: 0 2px;
}
.wrap {
  gap: 4px;
  margin-left: 2px;
}
.pct {
  font-size: 13px;
}
.comma {
  font-size: 18px;
  font-weight: bold;
  padding-bottom: 8px;
}
.dec {
  flex-direction: column;
  font-size: 8px;
  line-height: 7px;
  font-weight: bold;
}
.styles .tools {
  padding-left: 8px;
}
.styles .big {
  width: 58px;
}
.styles .big + .big {
  width: 49px;
}
.gallery {
  flex: 1;
  display: flex;
  height: 52px;
  margin: 2px 8px 0 0;
  background: #fff;
  border: 1px solid #d0d0d0;
}
.swatches {
  flex: 1;
  display: grid;
  grid-template-columns: repeat(5, 1fr);
  gap: 6px 5px;
  padding: 4px 3px;
}
.swatches button {
  justify-content: flex-start;
  padding-left: 3px;
  background: #f5f1f6;
  color: #77727a;
  font-size: 12px;
}
.swatches .gray {
  background: #e4e0e4;
  color: #99949a;
}
.swatches .faint {
  color: #b5afb6;
  background: #ebe7ec;
}
.swatches .calc {
  color: #b9b4ba;
  background: #ede8ee;
  border: 1px solid #bbb;
  font-weight: bold;
}
.gallery-scroll {
  width: 13px;
  display: grid;
  grid-template-rows: repeat(3, 1fr);
  background: #e3e3e3;
}
.gallery-scroll button {
  border: 1px solid #ccc;
}
.gallery-scroll .caret {
  border-width: 2px 2px 0;
  border-top-color: #aaa;
}
.cells .tools {
  padding-left: 6px;
}
.editing .tools {
  padding-left: 5px;
}
.editing .stack {
  width: 78px;
}
.big .az {
  display: flex;
  align-items: center;
  height: 26px;
  margin-top: 0;
  font-size: 11px;
  line-height: 14px;
}

/* formula bar */
.formula-bar {
  height: 134px;
  display: flex;
  align-items: flex-start;
  padding: 8px 5px 4px 4px;
}
.name-box, .fx {
  display: flex;
  align-items: center;
  height: 22px;
  background: #fff;
  border: 1px solid #c8c8c8;
}
.name-box {
  width: 85px;
  padding: 0 5px;
  font-size: 11px;
}
.name-box input {
  flex: 1;
  min-width: 0;
}
.formula-bar .dots {
  margin: 7px 12px 0;
}
.fx {
  width: 92px;
  justify-content: space-around;
}
.fx-btn {
  font-family: "Liberation Serif", serif;
  font-weight: bold;
  font-size: 13px;
  color: #666;
}
.fx-btn small {
  font-size: 9px;
  font-style: italic;
}
.formula-bar textarea {
  flex: 1;
  height: 122px;
  margin-left: 2px;
  resize: none;
  background: #fdfdfd;
  border: 1px solid #c8c8c8;
}
.formula-caret {
  width: 5px;
  height: 5px;
  border: 2px solid #777;
  border-width: 2px 0 0 2px;
  transform: rotate(45deg);
  margin: 9px 5px 0 -10px;
}

/* sheet */
.workspace {
  flex: 1;
  min-height: 0;
  display: flex;
}
.pane {
  position: relative;
  flex: 1;
  overflow: hidden;
  background: #fff;
  border: 1px solid #aaa;
  border-width: 0 1px 1px 0;
}
.sheet {
  width: 100%;
  table-layout: fixed;
  border-spacing: 0;
  font-family: "Liberation Sans", Arial, sans-serif;
  font-size: 11px;
  line-height: 13px;
  color: #111;
}
.sheet td, .sheet th {
  padding: 0;
  border: 1px solid #d4d4d4;
  border-width: 0 1px 1px 0;
  white-space: nowrap;
  overflow: hidden;
}
.sheet th {
  font-family: "Open Sans", sans-serif;
  font-size: 11px;
  font-weight: normal;
  background: #e6e6e6;
  color: #444;
}
.sheet thead th {
  height: 20px;
  padding-top: 3px;
  line-height: 16px;
  border-color: #bbb #bbb #9f9f9f;
}
.sheet .corner {
  background: linear-gradient(135deg, #e6e6e6 50%, #b4b4b4 50%) right 3px bottom 3px / 10px 10px no-repeat #e6e6e6;
}
.sheet thead .picked {
  background: #d2d2d2;
  color: #217346;
  border-bottom: 2px solid #217346;
}
.sheet tbody th {
  vertical-align: bottom;
  line-height: 14px;
  border-color: #c4c4c4 #aaa #c4c4c4;
}
.h14 {
  height: 14px;
}
.h21 {
  height: 21px;
}
.h22 {
  height: 22px;
}
.h24 {
  height: 24px;
}
.h60 {
  height: 60px;
}
.sheet .title {
  text-align: center;
}
.sheet .title, .info td {
  font-weight: bold;
}
.sheet .info td {
  padding-left: 2px;
}
.sheet .low td {
  vertical-align: bottom;
  padding-bottom: 1px;
}
.sheet .last td:not(:nth-child(n+18)) {
  border-bottom-color: #222;
}
.sheet .head td:not(.blank) {
  padding-top: 2px;
  background: #ffc000;
  border-color: #222;
  font-weight: bold;
  line-height: 17px;
  text-align: center;
}
.sheet .head td.open:not(.blank) {
  border-bottom-color: #ffc000;
}
.nums td:not(.blank) {
  background: #9bc2e6;
  border-color: #222;
  text-align: center;
  font-size: 8px;
  font-style: italic;
}
.nums td, .sheet .nums th {
  line-height: 12px;
}
#data tr {
  height: 22px;
}
#data tr:nth-child(3n+1) {
  height: 21px;
}
#data td:not(.blank) {
  border-color: #222;
  text-align: center;
}
.sheet .head td.left:not(.blank), #data td.left {
  text-align: left;
  padding-left: 1px;
}
#data .small {
  font-size: 9px;
}
.watermark {
  position: absolute;
  right: 53px;
  bottom: 0;
  color: #bdbdbd;
  font-family: "Open Sans", sans-serif;
  font-size: 16px;
  line-height: 20px;
}
.watermark p {
  margin: 0;
  font-size: 12px;
  line-height: 15px;
}
.vscroll {
  width: 18px;
  display: flex;
  flex-direction: column;
  padding: 6px 2px 0 3px;
}
.vscroll button, .hscroll button {
  width: 13px;
  height: 12px;
  background: #fff;
  border: 1px solid #bbb;
}
.vtrack {
  flex: 1;
  background: #d9d9d9;
}
.vthumb {
  height: 40px;
  background: #fff;
  border: 1px solid #bbb;
}

/* sheet tabs and status */
.sheet-tabs {
  height: 25px;
  display: flex;
  align-items: center;
  border-bottom: 1px solid #d6d6d6;
}
.tab-nav {
  width: 83px;
  display: flex;
  justify-content: center;
  gap: 20px;
  padding-right: 12px;
}
.tri {
  border: 3px solid transparent;
}
.tri.left {
  border-right-color: #bbb;
  border-left-width: 0;
}
.tri.right {
  border-left-color: #bbb;
  border-right-width: 0;
}
.sheet-tab {
  align-self: flex-start;
  width: 106px;
  height: 22px;
  background: #fff;
  border: 1px solid #c0c0c0;
  border-top: none;
  border-bottom: 2px solid #217346;
  color: #217346;
  font-size: 12px;
  font-weight: bold;
}
.add {
  margin-left: 27px;
}
.sheet-tabs .dots {
  margin-left: auto;
}
.hscroll {
  width: 611px;
  display: flex;
  margin: 0 15px 0 13px;
}
.hscroll button {
  height: 13px;
}
.hscroll .left {
  border-right-color: #777;
}
.hscroll .right {
  border-left-color: #777;
}
.htrack {
  flex: 1;
  background: #d9d9d9;
}
.hthumb {
  height: 13px;
  margin-right: 28px;
  background: #fff;
  border: 1px solid #bbb;
}
.status {
  height: 17px;
  display: flex;
  align-items: center;
  padding: 0 6px 2px 7px;
  background: #f3f3f3;
}
.views {
  display: flex;
  gap: 20px;
  margin-left: auto;
}
.zoom {
  display: flex;
  align-items: center;
  margin-left: 12px;
}
.zoom button {
  width: 8px;
  font-size: 12px;
  font-weight: bold;
}
.zoom input {
  width: 84px;
  height: 11px;
  margin: 0 2px;
  appearance: none;
  background: linear-gradient(#aaa, #aaa) center / 100% 1px no-repeat;
}
.zoom input::-webkit-slider-thumb {
  appearance: none;
  width: 1px;
  height: 5px;
  background: #999;
}
.zoom span {
  margin-left: 6px;
  color: #aaa;
}

/* taskbar */
.taskbar {
  height: 40px;
  display: grid;
  grid-template-columns: 1fr auto 1fr;
  align-items: center;
  border-top: 1px solid #b5b8a4;
  background: linear-gradient(90deg, #e3eab0, #dce0c6 20%, #dde1c6 45%, #dee3bf 70%, #dfe4ba);
}
.lines {
  display: flex;
  flex-direction: column;
  line-height: 13px;
  text-align: left;
}
.weather {
  justify-self: start;
  gap: 6px;
  padding-left: 15px;
}
.cloud {
  position: relative;
  display: flex;
  padding-top: 8px;
}
.badge, .avatar {
  position: absolute;
  right: -2px;
  top: -6px;
  width: 13px;
  height: 13px;
  border-radius: 50%;
  background: #c42b1c;
  color: #fff;
  font-size: 10px;
  font-style: normal;
  text-align: center;
}
.dim {
  color: #6b6b60;
}
.center {
  display: flex;
  align-items: center;
  padding-left: 9px;
}
.search {
  display: flex;
  align-items: center;
  width: 182px;
  height: 25px;
  margin: 0 3px 0 11px;
  padding: 0 5px 0 9px;
  border-radius: 13px;
  background: #f4f6ea;
}
.search input {
  flex: 1;
  min-width: 0;
  padding-left: 8px;
  font-size: 12px;
}
.search input::placeholder {
  color: #666;
}
.apps {
  width: 439px;
  display: flex;
  justify-content: space-between;
}
.apps button {
  position: relative;
  width: 32px;
  height: 32px;
  margin: 0 2px;
  border-radius: 4px;
}
.apps .lit {
  background: #eef1e0;
}
.run::after, .on::after {
  content: "";
  position: absolute;
  bottom: 0;
  width: 5px;
  height: 2px;
  border-radius: 2px;
  background: #85877a;
}
.on::after {
  width: 13px;
  background: #1a6fc0;
}
.avatar {
  right: -2px;
  top: 1px;
  background: #40505a;
  font-size: 8px;
}
.tray {
  display: flex;
  align-items: center;
  justify-self: end;
  padding-right: 17px;
}
.wifi {
  margin: 0 6px 0 16px;
}
.clock {
  margin: 0 7px 0 10px;
  text-align: right;
}
.tooltip {
  position: absolute;
  left: 841px;
  bottom: 51px;
  padding: 6px 8px;
  font-size: 11px;
  background: #f8f8f8;
  border-radius: 3px;
  box-shadow: 0 2px 5px rgba(0, 0, 0, 0.25);
}
```
